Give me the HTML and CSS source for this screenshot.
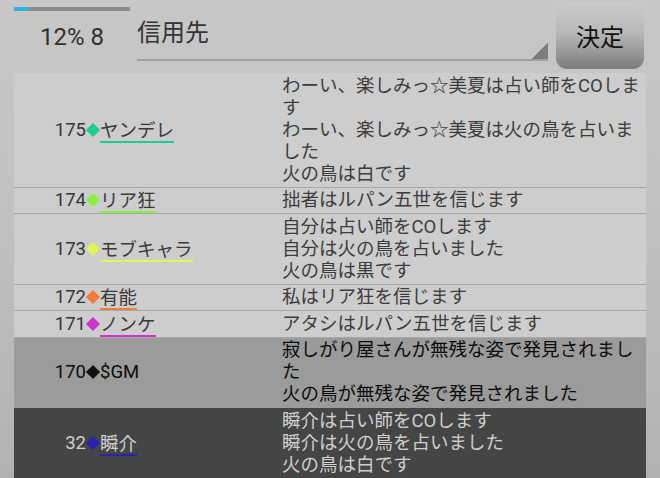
FILE: index.html
```html
<!DOCTYPE html>
<html lang="ja">
<head>
<meta charset="utf-8">
<link rel="stylesheet" href="styles.css">
</head>
<body>
<header class="top">
  <div class="status">
    <div class="progress"><div class="progress-fill" style="width:13%"></div></div>
    <div class="status-text">12% 8</div>
  </div>
  <div class="spinner">信用先</div>
  <button class="decide">決定</button>
</header>
<div class="list">
  <div class="row">
    <div class="num">175</div><div class="dia"><span class="d c-teal"></span></div><div class="name"><span class="nm u-teal">ヤンデレ</span></div>
    <div class="msg">わーい、楽しみっ☆美夏は占い師をCOします<br>わーい、楽しみっ☆美夏は火の鳥を占いました<br>火の鳥は白です</div>
  </div>
  <div class="row">
    <div class="num">174</div><div class="dia"><span class="d c-lime"></span></div><div class="name"><span class="nm u-lime">リア狂</span></div>
    <div class="msg">拙者はルパン五世を信じます</div>
  </div>
  <div class="row">
    <div class="num">173</div><div class="dia"><span class="d c-yellow"></span></div><div class="name"><span class="nm u-yellow">モブキャラ</span></div>
    <div class="msg">自分は占い師をCOします<br>自分は火の鳥を占いました<br>火の鳥は黒です</div>
  </div>
  <div class="row">
    <div class="num">172</div><div class="dia"><span class="d c-orange"></span></div><div class="name"><span class="nm u-orange">有能</span></div>
    <div class="msg">私はリア狂を信じます</div>
  </div>
  <div class="row">
    <div class="num">171</div><div class="dia"><span class="d c-magenta"></span></div><div class="name"><span class="nm u-magenta">ノンケ</span></div>
    <div class="msg">アタシはルパン五世を信じます</div>
  </div>
  <div class="row row-gm">
    <div class="num">170</div><div class="dia"><span class="d c-black"></span></div><div class="name"><span class="nm plain">$GM</span></div>
    <div class="msg">寂しがり屋さんが無残な姿で発見されました<br>火の鳥が無残な姿で発見されました</div>
  </div>
  <div class="row row-dark">
    <div class="num">32</div><div class="dia"><span class="d c-blue"></span></div><div class="name"><span class="nm u-blue">瞬介</span></div>
    <div class="msg">瞬介は占い師をCOします<br>瞬介は火の鳥を占いました<br>火の鳥は白です</div>
  </div>
</div>
</body>
</html>
```
FILE: styles.css
```css
html, body {
  margin: 0;
  padding: 0;
}
body {
  width: 660px;
  height: 478px;
  overflow: hidden;
  background: linear-gradient(to bottom, #c7c7c7 0%, #c2c2c2 40%, #b2b2b2 100%);
  font-family: Roboto, "Noto Sans CJK JP", sans-serif;
  color: #383838;
}
.top {
  display: flex;
  align-items: flex-start;
  height: 73px;
  padding-left: 14px;
  box-sizing: border-box;
}
.status {
  width: 116px;
  padding-top: 7px;
}
.progress {
  height: 4px;
  background: #8c8c8c;
}
.progress-fill {
  height: 4px;
  background: #3ab0e2;
}
.status-text {
  margin-top: 12px;
  text-align: center;
  font-size: 24px;
  line-height: 28px;
  color: #303030;
}
.spinner {
  margin-left: 7px;
  width: 411px;
  height: 61px;
  box-sizing: border-box;
  padding-top: 19px;
  font-family: "Noto Sans CJK JP", sans-serif;
  font-size: 24px;
  line-height: 24px;
  color: #333;
  border-bottom: 2px solid #a0a0a0;
  background: linear-gradient(to bottom right, transparent 50%, #7d7d7d 50%) no-repeat right bottom / 16px 16px;
}
.decide {
  margin-left: 8px;
  margin-top: 2px;
  width: 88px;
  height: 67px;
  border: none;
  border-radius: 11px;
  background: linear-gradient(to bottom, #cbcbcb 0%, #b9b9b9 45%, #7c7c7c 100%);
  font-family: "Noto Sans CJK JP", sans-serif;
  font-size: 24px;
  color: #111;
  padding: 0;
}
.list {
  margin-left: 14px;
  width: 632px;
  background: #cdcdcd;
}
.row {
  display: grid;
  grid-template-columns: 72px 14px 182px 364px;
  align-items: center;
  padding: 1.5px 0 2px;
  border-bottom: 1px solid #a8a8a8;
  font-size: 18.5px;
  line-height: 22px;
  color: #3a3a3a;
}
.num {
  text-align: right;
  color: #353535;
  height: 22px;
}
.dia {
  display: flex;
  justify-content: center;
  align-items: center;
  height: 22px;
}
.d {
  display: block;
  width: 10px;
  height: 10px;
  transform: rotate(45deg);
}
.name {
  font-family: "Noto Sans CJK JP", sans-serif;
  height: 22px;
  display: flex;
  align-items: flex-start;
}
.nm {
  display: block;
  line-height: 21px;
  height: 21px;
  padding-bottom: 1px;
  border-bottom: 2.5px solid transparent;
}
.nm.plain {
  font-family: Roboto, sans-serif;
  line-height: 22px;
}
.msg {
  align-self: start;
  font-family: Roboto, "Noto Sans CJK JP", sans-serif;
  color: #3c3c3c;
}
.c-teal { background: #1ccd8c; }
.c-lime { background: #8cf040; }
.c-yellow { background: #e2f456; }
.c-orange { background: #f47c34; }
.c-magenta { background: #cc35cc; }
.c-black { background: #111; }
.c-blue { background: #2b20b4; }
.u-teal { border-bottom-color: #1ccd8c; }
.u-lime { border-bottom-color: #8cf040; }
.u-yellow { border-bottom-color: #e2f456; }
.u-orange { border-bottom-color: #f47c34; }
.u-magenta { border-bottom-color: #cc35cc; }
.u-blue { border-bottom-color: #2b20b4; }
.row-gm {
  background: #9b9b9b;
  border-bottom-color: #9b9b9b;
}
.row-gm .num, .row-gm .name, .row-gm .msg {
  color: #0c0c0c;
}
.row-dark {
  background: #454545;
  border-bottom-color: #b8b8b8;
}
.row-dark .num, .row-dark .name, .row-dark .msg {
  color: #cfcfcf;
}
```
